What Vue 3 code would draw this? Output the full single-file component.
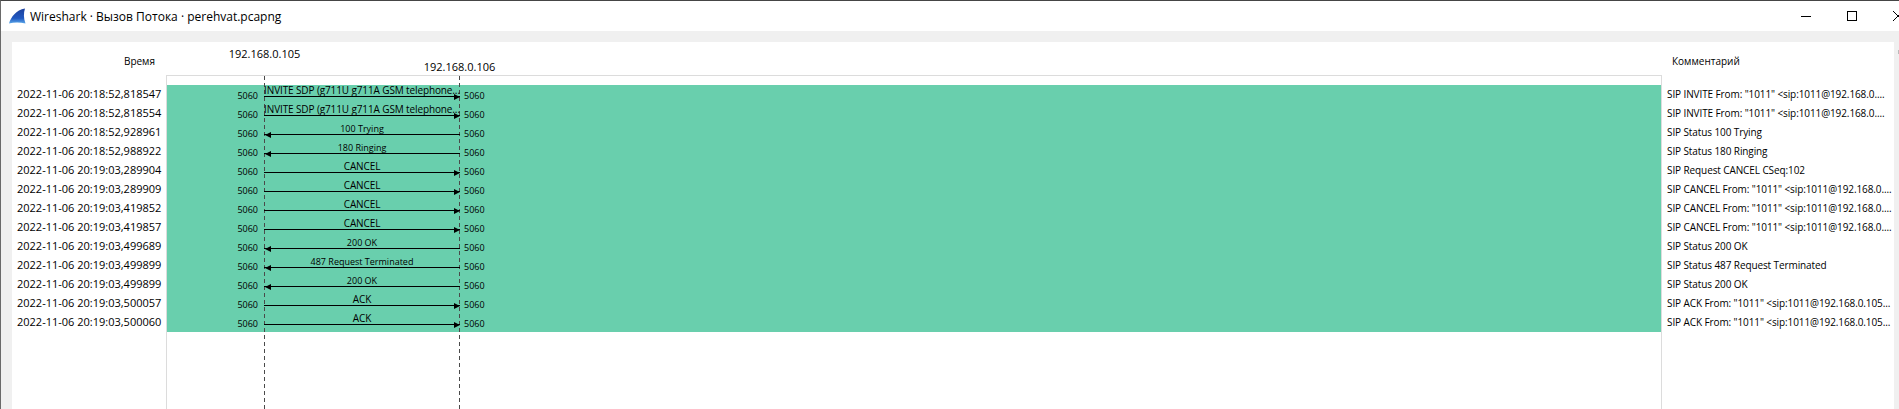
<template>
  <div class="window">
    <header class="titlebar">
      <svg class="app-icon" width="18" height="17" viewBox="0 0 18 17">
        <defs>
          <linearGradient id="fin" x1="0" y1="0" x2="0" y2="1">
            <stop offset="0" stop-color="#1c3f9c" />
            <stop offset="0.65" stop-color="#2058c0" />
            <stop offset="1" stop-color="#5ba8ea" />
          </linearGradient>
        </defs>
        <path d="M0 15.500C2 9 7 2 16 .5C14.500 5 14.500 10 16.500 15.500C11 14 5 14 0 15.500Z" fill="url(#fin)" />
      </svg>
      <span class="title">Wireshark · Вызов Потока · perehvat.pcapng</span>
      <div class="controls">
        <span class="ctl"><svg width="10" height="10" viewBox="0 0 10 10"><path d="M0 5.500H10" stroke="#000" /></svg></span>
        <span class="ctl"><svg width="10" height="10" viewBox="0 0 10 10"><rect x=".5" y=".5" width="9" height="9" fill="none" stroke="#000" /></svg></span>
        <span class="ctl"><svg width="10" height="10" viewBox="0 0 10 10"><path d="M0 0L10 10M10 0L0 10" stroke="#000" /></svg></span>
      </div>
    </header>

    <main class="content">
      <div class="chart">
        <div class="head time-head">Время</div>
        <div class="hosts">
          <span class="host">192.168.0.105</span>
          <span class="host second">192.168.0.106</span>
        </div>
        <div class="head comment-head">Комментарий</div>

        <div class="times">
          <div v-for="row in rows" :key="row.id" class="time">{{ row.time }}</div>
        </div>

        <div class="plot">
          <i class="lifeline left"></i>
          <i class="lifeline right"></i>
          <div v-for="row in rows" :key="row.id" class="flow">
            <span class="port from">5060</span>
            <div class="arrow" :class="row.dir">
              <span class="label">{{ row.label }}</span>
            </div>
            <span class="port to">5060</span>
          </div>
        </div>

        <div class="comments">
          <div v-for="row in rows" :key="row.id" class="comment">{{ row.comment }}</div>
        </div>
      </div>
      <i class="scroll-mark"></i>
    </main>
  </div>
</template>

<script setup>
const invite = 'INVITE SDP (g711U g711A GSM telephone...'
const fromInvite = 'SIP INVITE From: "1011" <sip:1011@192.168.0....'
const fromCancel = 'SIP CANCEL From: "1011" <sip:1011@192.168.0....'
const fromAck = 'SIP ACK From: "1011" <sip:1011@192.168.0.105...'

const rows = [
  ['2022-11-06 20:18:52,818547', invite, 'right', fromInvite],
  ['2022-11-06 20:18:52,818554', invite, 'right', fromInvite],
  ['2022-11-06 20:18:52,928961', '100 Trying', 'left', 'SIP Status 100 Trying'],
  ['2022-11-06 20:18:52,988922', '180 Ringing', 'left', 'SIP Status 180 Ringing'],
  ['2022-11-06 20:19:03,289904', 'CANCEL', 'right', 'SIP Request CANCEL CSeq:102'],
  ['2022-11-06 20:19:03,289909', 'CANCEL', 'right', fromCancel],
  ['2022-11-06 20:19:03,419852', 'CANCEL', 'right', fromCancel],
  ['2022-11-06 20:19:03,419857', 'CANCEL', 'right', fromCancel],
  ['2022-11-06 20:19:03,499689', '200 OK', 'left', 'SIP Status 200 OK'],
  ['2022-11-06 20:19:03,499899', '487 Request Terminated', 'left', 'SIP Status 487 Request Terminated'],
  ['2022-11-06 20:19:03,499899', '200 OK', 'left', 'SIP Status 200 OK'],
  ['2022-11-06 20:19:03,500057', 'ACK', 'right', fromAck],
  ['2022-11-06 20:19:03,500060', 'ACK', 'right', fromAck],
].map(([time, label, dir, comment], id) => ({ id, time, label, dir, comment }))
</script>

<style>
html,
body {
  margin: 0;
  overflow: hidden;
  background: #f0f0f0;
}
</style>

<style scoped>
.window {
  width: 1899px;
  height: 409px;
  display: flex;
  flex-direction: column;
  box-sizing: border-box;
  border-top: 1px solid #454545;
  border-left: 1px solid #6a6a6a;
  background: #f0f0f0;
  font-family: "Open Sans", "Noto Sans", sans-serif;
  color: #000;
  overflow: hidden;
}

.titlebar {
  height: 30px;
  flex: none;
  display: flex;
  align-items: center;
  background: #fff;
  padding-left: 8px;
}

.app-icon {
  margin-top: 1px;
}

.title {
  margin-left: 3px;
  font-size: 12px;
}

.controls {
  margin-left: auto;
  margin-right: -22px;
  display: flex;
}

.ctl {
  width: 46px;
  height: 30px;
  display: flex;
  align-items: center;
  justify-content: center;
}

.content {
  flex: 1;
  min-height: 0;
  position: relative;
  padding: 11px 5px 0 11px;
  display: flex;
}

.scroll-mark {
  position: absolute;
  right: 0;
  top: 19px;
  width: 1px;
  height: 4px;
  background: #bbb;
}

.chart {
  flex: 1;
  background: #fff;
  display: grid;
  grid-template-columns: 154px 1496px 1fr;
  grid-template-rows: 33px 1fr;
  font-size: 11px;
}

.head {
  padding-top: 11px;
  line-height: 16px;
  font-size: 10px;
}

.time-head {
  text-align: right;
  padding-right: 11px;
}

.comment-head {
  padding-left: 10px;
}

.hosts {
  display: flex;
  padding-left: 1px;
}

.host {
  width: 195px;
  text-align: center;
  line-height: 16px;
  padding-top: 4px;
}

.host.second {
  padding-top: 17px;
}

.times {
  padding: 10px 0 0 5px;
}

.time {
  height: 19px;
  line-height: 18px;
  white-space: nowrap;
}

.plot {
  position: relative;
  box-sizing: border-box;
  border: 1px solid #dcdcdc;
  border-bottom: 0;
  padding-top: 9px;
}

.lifeline {
  position: absolute;
  top: 0;
  bottom: 0;
  width: 1px;
  background: repeating-linear-gradient(to bottom, #4a4a4a 0 4px, transparent 4px 7px);
}

.lifeline.left {
  left: 97px;
}

.lifeline.right {
  left: 292px;
}

.flow {
  height: 19px;
  display: flex;
  background: #69cfad;
}

.port {
  font-size: 9px;
  line-height: 16px;
  margin-top: 3px;
}

.port.from {
  width: 91px;
  text-align: right;
  margin-right: 6px;
}

.port.to {
  margin-left: 4px;
}

.arrow {
  position: relative;
  width: 196px;
  height: 12px;
  box-sizing: border-box;
  border-bottom: 1px solid #000;
  text-align: center;
  white-space: nowrap;
}

/* arrow heads sit on the line */
.arrow::after {
  content: "";
  position: absolute;
  bottom: -3.500px;
  border-top: 3px solid transparent;
  border-bottom: 3px solid transparent;
}

.arrow.right::after {
  right: 0;
  border-left: 6px solid #000;
}

.arrow.left::after {
  left: 1px;
  border-right: 6px solid #000;
}

.label {
  display: block;
  font-size: 10px;
  line-height: 11px;
  letter-spacing: -0.12px;
}

.arrow.left .label {
  font-size: 9px;
  letter-spacing: 0;
}

.comments {
  padding: 10px 0 0 5px;
}

.comment {
  height: 19px;
  line-height: 18px;
  font-size: 10px;
  letter-spacing: -0.1px;
  white-space: nowrap;
}
</style>
